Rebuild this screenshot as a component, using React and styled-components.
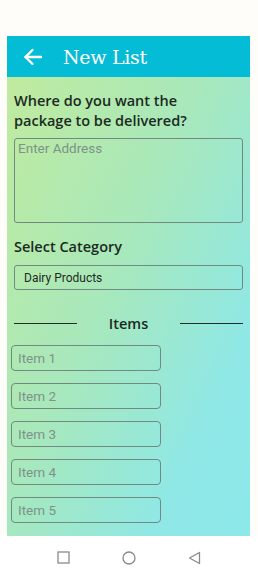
import React from 'react';
import styled, { createGlobalStyle } from 'styled-components';

const GlobalStyle = createGlobalStyle`
  html, body {
    margin: 0;
    padding: 0;
    background: #ffffff;
  }
  * {
    box-sizing: border-box;
  }
`;

const Screen = styled.div`
  width: 258px;
  height: 573px;
  display: flex;
  flex-direction: column;
  background: #fffdfa;
`;

const Panel = styled.div`
  margin: 36px 8px 0 7px;
  height: 500px;
  display: flex;
  flex-direction: column;
  background: linear-gradient(115deg, #c2eb9b 0%, #a8e8bb 45%, #8fe8e6 80%, #8de8ea 100%);
  overflow: hidden;
`;

const Header = styled.div`
  height: 41px;
  background: #04bcd6;
  display: flex;
  align-items: center;
  padding-left: 16px;
  gap: 20px;
`;

const Title = styled.h1`
  margin: 0;
  font-family: 'DejaVu Serif', serif;
  font-weight: normal;
  font-size: 19px;
  color: #ffffff;
  letter-spacing: -0.3px;
`;

const Body = styled.div`
  padding: 0 7px 0 7px;
  display: flex;
  flex-direction: column;
`;

const Label = styled.h2`
  margin: ${(p) => p.$margin || '0'};
  font-family: 'Open Sans', sans-serif;
  font-weight: 650;
  font-size: 14.5px;
  line-height: 20px;
  color: #1b2a22;
`;

const AddressBox = styled.textarea`
  display: block;
  width: 229px;
  height: 85px;
  margin: 0;
  padding: 1px 3px;
  border: 1px solid #6f8a80;
  border-radius: 3px;
  background: transparent;
  resize: none;
  font-family: Roboto, sans-serif;
  font-size: 13.5px;
  color: #333;
  outline: none;
  &::placeholder {
    color: #7d928b;
  }
`;

const SelectBox = styled.div`
  width: 229px;
  height: 25px;
  border: 1px solid #6f8a80;
  border-radius: 3px;
  display: flex;
  align-items: center;
  padding-left: 9px;
  font-family: Roboto, sans-serif;
  font-size: 12px;
  color: #1f2a25;
`;

const Divider = styled.div`
  display: flex;
  align-items: center;
  margin: 23px 0 12px 0;
  height: 20px;
`;

const Rule = styled.div`
  width: 63px;
  height: 1px;
  background: #1f2f28;
`;

const DividerText = styled.span`
  flex: 1;
  text-align: center;
  font-family: 'Open Sans', sans-serif;
  font-weight: 650;
  font-size: 14.5px;
  color: #1b2a22;
`;

const ItemList = styled.div`
  display: flex;
  flex-direction: column;
  gap: 12px;
  margin-left: -3px;
`;

const ItemInput = styled.input`
  width: 150px;
  height: 26px;
  margin: 0;
  padding: 0 6px;
  border: 1px solid #6f8a80;
  border-radius: 4px;
  background: transparent;
  font-family: Roboto, sans-serif;
  font-size: 13.5px;
  outline: none;
  &::placeholder {
    color: #7d928b;
  }
`;

const NavBar = styled.div`
  flex: 1;
  display: flex;
  align-items: center;
  justify-content: center;
  gap: 52px;
  padding-top: 6px;
  background: #ffffff;
`;

const Arrow = () => (
  <svg width="20" height="18" viewBox="0 0 20 18" fill="none" stroke="#fff" strokeWidth="2.4" strokeLinecap="round" strokeLinejoin="round">
    <path d="M18 9H2.5" />
    <path d="M9.5 2L2.5 9l7 7" />
  </svg>
);

const items = ['Item 1', 'Item 2', 'Item 3', 'Item 4', 'Item 5'];

export default function App() {
  return (
    <>
      <GlobalStyle />
      <Screen>
        <Panel>
          <Header>
            <Arrow />
            <Title>New List</Title>
          </Header>
          <Body>
            <Label $margin="14px 0 7px 0">
              Where do you want the
              <br />
              package to be delivered?
            </Label>
            <AddressBox placeholder="Enter Address" />
            <Label $margin="14px 0 8px 0">Select Category</Label>
            <SelectBox>Dairy Products</SelectBox>
            <Divider>
              <Rule />
              <DividerText>Items</DividerText>
              <Rule />
            </Divider>
            <ItemList>
              {items.map((it) => (
                <ItemInput key={it} placeholder={it} />
              ))}
            </ItemList>
          </Body>
        </Panel>
        <NavBar>
          <svg width="13" height="13" viewBox="0 0 13 13">
            <rect x="1" y="1" width="11" height="11" fill="none" stroke="#8a8a8a" strokeWidth="1.3" />
          </svg>
          <svg width="14" height="14" viewBox="0 0 14 14">
            <circle cx="7" cy="7" r="6" fill="none" stroke="#8a8a8a" strokeWidth="1.3" />
          </svg>
          <svg width="13" height="14" viewBox="0 0 13 14">
            <path d="M11.5 1.5L1.5 7l10 5.5z" fill="none" stroke="#8a8a8a" strokeWidth="1.3" strokeLinejoin="round" />
          </svg>
        </NavBar>
      </Screen>
    </>
  );
}
